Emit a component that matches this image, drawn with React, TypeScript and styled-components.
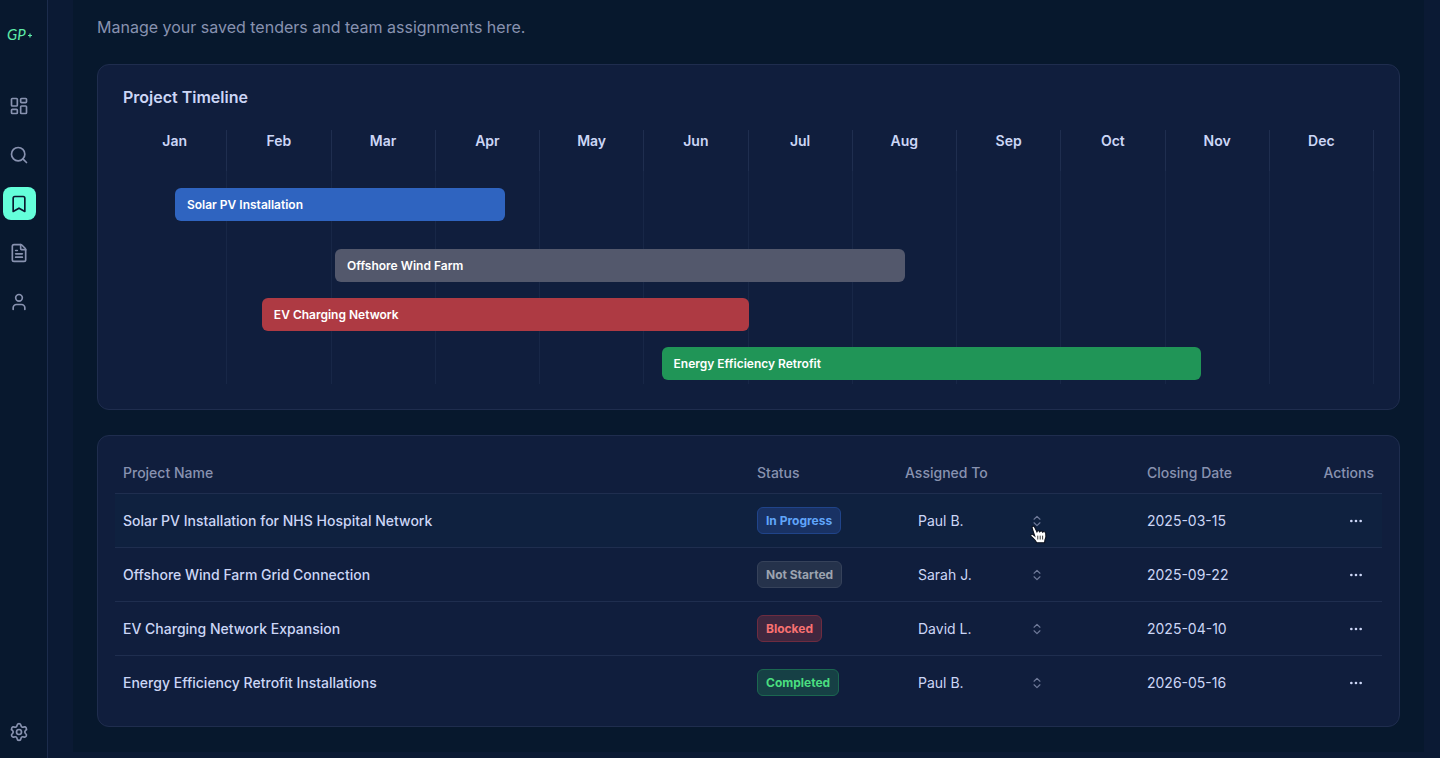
import React from "react";
import styled, { createGlobalStyle } from "styled-components";
import {
  LayoutDashboard,
  Search,
  Bookmark,
  FileText,
  User,
  Settings,
  ChevronsUpDown,
  Ellipsis,
} from "lucide-react";

const GlobalStyle = createGlobalStyle`
  *, *::before, *::after { box-sizing: border-box; }
  body {
    margin: 0;
    background: #0b1a34;
    color: #ccd6f6;
    font-family: Inter, "Liberation Sans", sans-serif;
    font-size: 14px;
    line-height: 20px;
  }
`;

const Shell = styled.div`
  display: flex;
  min-height: 100vh;
`;

const Sidebar = styled.nav`
  display: flex;
  flex-direction: column;
  align-items: center;
  flex: 0 0 48px;
  padding: 24px 9px 10px 0;
  background: #08182e;
  border-right: 1px solid #1c2c4c;
`;

const Logo = styled.a`
  display: block;
  width: 28px;
  height: 22px;
  margin-bottom: 43px;
`;

const NavList = styled.div`
  display: flex;
  flex-direction: column;
  flex: 1;
  gap: 16px;
`;

const NavLink = styled.a<{ $active?: boolean }>`
  display: flex;
  align-items: center;
  justify-content: center;
  width: 33px;
  height: 33px;
  border-radius: 8px;
  color: ${(p) => (p.$active ? "#0a192f" : "#8892b0")};
  background: ${(p) => (p.$active ? "#64ffda" : "transparent")};
`;

const Main = styled.main`
  flex: 1;
  min-width: 0;
  margin: 0 16px 6px 25px;
  padding: 15px 24px 25px;
  background: #07182d;
`;

const Intro = styled.p`
  margin: 0 0 25px;
  font-size: 16px;
  line-height: 24px;
  color: #8892b0;
`;

const Card = styled.section<{ $pad: string }>`
  padding: ${(p) => p.$pad};
  border: 1px solid #1f2d4e;
  border-radius: 12px;
  background: #101e3d;
  & + & { margin-top: 25px; }
`;

const CardTitle = styled.h2`
  margin: 0 0 21px;
  font-size: 16px;
  line-height: 24px;
  font-weight: 600;
`;

const Months = styled.div`
  display: grid;
  grid-template-columns: repeat(12, 1fr);
`;

const Month = styled.div`
  height: 41px;
  border-right: 1px solid #1f2e4f;
  font-weight: 600;
  line-height: 22px;
  text-align: center;
`;

const Chart = styled.div`
  display: grid;
`;

const GridLines = styled(Months)`
  grid-area: 1 / 1;
`;

const GridLine = styled.div`
  border-right: 1px solid #182747;
`;

const Bars = styled.div`
  grid-area: 1 / 1;
  display: flex;
  flex-direction: column;
  gap: 16px;
  padding: 17px 0 4px;
`;

const Bar = styled.div<{ $color: string; $start: number; $span: number; $spaced?: boolean }>`
  width: ${(p) => p.$span}%;
  height: 33px;
  margin-left: ${(p) => p.$start}%;
  margin-bottom: ${(p) => (p.$spaced ? 12 : 0)}px;
  padding: 0 12px;
  border-radius: 6px;
  background: ${(p) => p.$color};
  color: #fff;
  font-size: 12px;
  line-height: 33px;
  font-weight: 600;
`;

const Table = styled.table`
  width: 100%;
  border-collapse: collapse;
  table-layout: fixed;
`;

const Col = styled.col<{ $width?: number }>`
  width: ${(p) => (p.$width ? p.$width + "px" : "auto")};
`;

const Th = styled.th<{ $right?: boolean }>`
  height: 41px;
  padding: 2px 8px 0;
  color: #8892b0;
  font-weight: 500;
  text-align: ${(p) => (p.$right ? "right" : "left")};
`;

const Row = styled.tr<{ $hover?: boolean }>`
  border-top: 1px solid #1f2e4f;
  background: ${(p) => (p.$hover ? "#0f213f" : "transparent")};
`;

const Td = styled.td<{ $strong?: boolean; $right?: boolean }>`
  height: 54px;
  padding: 1px 8px 0;
  font-weight: ${(p) => (p.$strong ? 500 : 400)};
  text-align: ${(p) => (p.$right ? "right" : "left")};
`;

const Badge = styled.span<{ $tone: Tone }>`
  display: inline-block;
  padding: 0 8px;
  border: 1px solid ${(p) => tones[p.$tone].border};
  border-radius: 6px;
  background: ${(p) => tones[p.$tone].fill};
  color: ${(p) => tones[p.$tone].text};
  font-size: 12px;
  line-height: 25px;
  font-weight: 700;
  vertical-align: middle;
`;

const Picker = styled.label`
  display: grid;
  width: 148px;
  align-items: center;
  color: #6f7a99;
  svg {
    grid-area: 1 / 1;
    justify-self: end;
    margin-right: 9px;
    pointer-events: none;
  }
`;

const Select = styled.select`
  grid-area: 1 / 1;
  width: 100%;
  height: 36px;
  padding: 0 13px;
  border: 0;
  appearance: none;
  background: transparent;
  color: #ccd6f6;
  font: inherit;
  cursor: pointer;
`;

const MoreButton = styled.button`
  display: inline-flex;
  align-items: center;
  justify-content: center;
  width: 36px;
  height: 32px;
  padding: 0;
  border: 0;
  background: transparent;
  color: #ccd6f6;
  vertical-align: middle;
`;

const Pointer = styled.svg`
  position: absolute;
  left: 1028px;
  top: 523px;
  pointer-events: none;
`;

type Tone = "blue" | "gray" | "red" | "green";

const tones: Record<Tone, { bar: string; fill: string; border: string; text: string }> = {
  blue: { bar: "#2f64c0", fill: "#193264", border: "#20448a", text: "#60a5fa" },
  gray: { bar: "#53586c", fill: "#25324b", border: "#36425a", text: "#9ca3af" },
  red: { bar: "#ae3a43", fill: "#40273f", border: "#6e2c40", text: "#f87171" },
  green: { bar: "#209557", fill: "#164045", border: "#1b6750", text: "#4ade80" },
};

const months = ["Jan", "Feb", "Mar", "Apr", "May", "Jun", "Jul", "Aug", "Sep", "Oct", "Nov", "Dec"];

const bars: { label: string; tone: Tone; start: number; span: number; spaced?: boolean }[] = [
  { label: "Solar PV Installation", tone: "blue", start: 4.15, span: 26.4, spaced: true },
  { label: "Offshore Wind Farm", tone: "gray", start: 16.95, span: 45.55 },
  { label: "EV Charging Network", tone: "red", start: 11.1, span: 38.95 },
  { label: "Energy Efficiency Retrofit", tone: "green", start: 43.05, span: 43.1 },
];

const people = ["Paul B.", "Sarah J.", "David L."];

const projects: { name: string; status: string; tone: Tone; owner: string; date: string; hover?: boolean }[] = [
  { name: "Solar PV Installation for NHS Hospital Network", status: "In Progress", tone: "blue", owner: "Paul B.", date: "2025-03-15", hover: true },
  { name: "Offshore Wind Farm Grid Connection", status: "Not Started", tone: "gray", owner: "Sarah J.", date: "2025-09-22" },
  { name: "EV Charging Network Expansion", status: "Blocked", tone: "red", owner: "David L.", date: "2025-04-10" },
  { name: "Energy Efficiency Retrofit Installations", status: "Completed", tone: "green", owner: "Paul B.", date: "2026-05-16" },
];

const navItems = [
  { label: "Dashboard", Icon: LayoutDashboard },
  { label: "Search", Icon: Search },
  { label: "Saved", Icon: Bookmark, active: true },
  { label: "Documents", Icon: FileText },
  { label: "Profile", Icon: User },
];

export default function App() {
  return (
    <>
      <GlobalStyle />
      <Shell>
        <Sidebar>
          <Logo href="#" aria-label="Home">
            <svg width="28" height="22" viewBox="0 0 28 22">
              <text x="2" y="16" fill="#5eeaa8" fontFamily="Lato, sans-serif" fontStyle="italic" fontSize="15">GP</text>
              <path d="M25 9.500v4M23 11.500h4" stroke="#5eeaa8" strokeWidth="1.200" />
            </svg>
          </Logo>
          <NavList>
            {navItems.map(({ label, Icon, active }) => (
              <NavLink key={label} href="#" aria-label={label} $active={active}>
                <Icon size={20} strokeWidth={2} />
              </NavLink>
            ))}
          </NavList>
          <NavLink href="#" aria-label="Settings">
            <Settings size={20} />
          </NavLink>
        </Sidebar>
        <Main>
          <Intro>Manage your saved tenders and team assignments here.</Intro>
          <Card $pad="20px 25px 25px">
            <CardTitle>Project Timeline</CardTitle>
            <Months>
              {months.map((m) => (
                <Month key={m}>{m}</Month>
              ))}
            </Months>
            <Chart>
              <GridLines>
                {months.map((m) => (
                  <GridLine key={m} />
                ))}
              </GridLines>
              <Bars>
                {bars.map((b) => (
                  <Bar key={b.label} $color={tones[b.tone].bar} $start={b.start} $span={b.span} $spaced={b.spaced}>
                    {b.label}
                  </Bar>
                ))}
              </Bars>
            </Chart>
          </Card>
          <Card $pad="16px 17px 17px">
            <Table>
              <colgroup>
                <Col />
                <Col $width={148} />
                <Col $width={242} />
                <Col $width={144} />
                <Col $width={99} />
              </colgroup>
              <thead>
                <tr>
                  <Th>Project Name</Th>
                  <Th>Status</Th>
                  <Th>Assigned To</Th>
                  <Th>Closing Date</Th>
                  <Th $right>Actions</Th>
                </tr>
              </thead>
              <tbody>
                {projects.map((p) => (
                  <Row key={p.name} $hover={p.hover}>
                    <Td $strong>{p.name}</Td>
                    <Td>
                      <Badge $tone={p.tone}>{p.status}</Badge>
                    </Td>
                    <Td>
                      <Picker>
                        <Select defaultValue={p.owner} aria-label={"Assigned to, " + p.name}>
                          {people.map((x) => (
                            <option key={x}>{x}</option>
                          ))}
                        </Select>
                        <ChevronsUpDown size={14} />
                      </Picker>
                    </Td>
                    <Td>{p.date}</Td>
                    <Td $right>
                      <MoreButton aria-label={"Actions for " + p.name}>
                        <Ellipsis size={16} />
                      </MoreButton>
                    </Td>
                  </Row>
                ))}
              </tbody>
            </Table>
          </Card>
        </Main>
      </Shell>
      <Pointer width="20" height="22" viewBox="0 0 18 20" aria-hidden="true">
        <path
          d="M6 11.800 3.700 4.800C3.100 3 5.200 2.100 6 3.800L8 8c.4-1.200 2.200-1.200 2.600-.1.600-1 2.200-.8 2.600.4.800-.9 2.500-.5 2.800.9.500 2.400.2 4.300-.7 6.300l-.3 2.400H7.800c-1-2.200-3-3.800-5-5.700-1.100-1.200.3-2.600 1.600-1.600z"
          fill="#fff"
          stroke="#0a0f1c"
          strokeWidth="1"
        />
        <path d="M8.800 11.500v3.500M11 11.500v3.500M13.200 11.500v3.500" stroke="#222" strokeWidth=".8" />
      </Pointer>
    </>
  );
}
